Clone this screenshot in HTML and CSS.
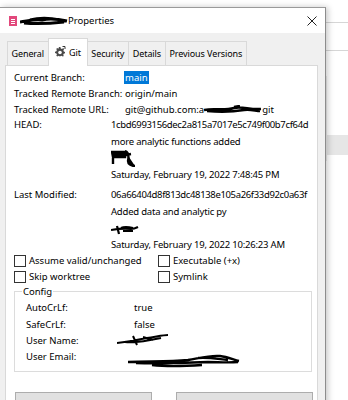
FILE: index.html
```html
<!DOCTYPE html>
<html lang="en">
<head>
    <meta charset="UTF-8">
    <meta name="viewport" content="width=device-width, initial-scale=1.0">
    <title>Properties</title>
    <link rel="stylesheet" href="styles.css">
</head>
<body>
    <div class="desk">
        <div class="bg-line bg-line-1"></div>
        <div class="bg-line bg-line-2"></div>
        <div class="bg-band"></div>

        <div class="window">
            <div class="titlebar">
                <svg class="file-icon" width="8" height="10" viewBox="0 0 8 10">
                    <rect x="0" y="0" width="8" height="10" fill="#e2487c"/>
                    <rect x="2" y="3" width="4" height="1" fill="#fff"/>
                    <rect x="2" y="5" width="4" height="1" fill="#fff"/>
                    <rect x="2" y="7" width="4" height="1" fill="#fff"/>
                </svg>
                <span class="title">
                    <svg class="scribble" width="48" height="10" viewBox="0 0 48 10">
                        <path d="M0 6 C8 5 14 3 22 4 C30 2 38 3 47 5 M4 7 C14 8 26 8 44 6 M10 4 C18 2 30 2 40 4" stroke="#000" stroke-width="3" fill="none"/>
                    </svg>Properties
                </span>
                <svg class="close" width="10" height="10" viewBox="0 0 10 10">
                    <path d="M0.5 0.5 L9.5 9.5 M9.5 0.5 L0.5 9.5" stroke="#222" stroke-width="1"/>
                </svg>
            </div>

            <div class="dialog">
                <div class="tabs">
                    <div class="tab">General</div>
                    <div class="tab tab-active">
                        <svg class="gear" width="12" height="11" viewBox="0 0 12 11">
                            <path d="M5 1 L6.4 1 L6.8 2.4 L8 2.9 L9.2 2.1 L10.1 3.1 L9.4 4.3 L9.8 5.5 L11 5.9 L11 7.3 L9.7 7.7 L9.2 8.9 L9.9 10 L8.7 10.6 L7.6 9.8 L6.4 10.2 L5 10.2 L4.6 9.8 L3.4 10.5 L2.3 9.7 L2.9 8.6 L2.4 7.5 L1 7.1 L1 5.7 L2.4 5.3 L2.9 4.1 L2.2 3 L3.2 2.1 L4.4 2.8 Z" fill="#4a4a4a"/>
                            <circle cx="6" cy="6.5" r="1.8" fill="#fff"/>
                            <path d="M8.5 0.5 L11 0.5 L11 3" stroke="#333" stroke-width="1" fill="none"/>
                        </svg>Git
                    </div>
                    <div class="tab">Security</div>
                    <div class="tab">Details</div>
                    <div class="tab">Previous Versions</div>
                </div>

                <div class="panel">
                    <div class="info info-top">
                        <span class="label">Current Branch:</span>
                        <span class="value"><span class="selected">main</span></span>
                        <span class="label">Tracked Remote Branch:</span>
                        <span class="value">origin/main</span>
                        <span class="label">Tracked Remote URL:</span>
                        <span class="value">git@github.com:a<svg class="scribble" width="58" height="9" viewBox="0 0 58 9">
                            <path d="M0 5 C10 3 20 6 30 3 C38 1 46 5 57 4 M3 6 C14 7 28 7 40 5 C46 4 52 6 56 6 M30 2 L36 1" stroke="#000" stroke-width="2.6" fill="none"/>
                        </svg>git</span>
                    </div>

                    <div class="info info-commit">
                        <span class="label">HEAD:</span>
                        <div class="commit">
                            <div class="hash">1cbd6993156dec2a815a7017e5c749f00b7cf64d</div>
                            <div>more analytic functions added</div>
                            <div class="author">
                                <svg width="26" height="17" viewBox="0 0 26 17">
                                    <path d="M1 2 L14 2 L14 7 L2 7 Z M2 3 L2 14 M14 1 C17 2 18 6 17 11 C17 14 20 16 24 16 M15 5 L20 4" stroke="#000" stroke-width="2.4" fill="#000"/>
                                </svg>
                            </div>
                            <div>Saturday, February 19, 2022 7:48:45 PM</div>
                        </div>
                        <span class="label">Last Modified:</span>
                        <div class="commit">
                            <div class="hash">06a66404d8f813dc48138e105a26f33d92c0a63f</div>
                            <div>Added data and analytic py</div>
                            <div class="author">
                                <svg width="28" height="12" viewBox="0 0 28 12">
                                    <path d="M0 7 C6 6 12 5 20 6 C23 6 25 5 27 4 M6 3 L8 11 M10 5 C14 3 18 4 22 5 M12 8 L22 8" stroke="#000" stroke-width="2.2" fill="none"/>
                                </svg>
                            </div>
                            <div>Saturday, February 19, 2022 10:26:23 AM</div>
                        </div>
                    </div>

                    <div class="flags">
                        <label class="check"><span class="box"></span>Assume valid/unchanged</label>
                        <label class="check"><span class="box"></span>Executable (+x)</label>
                        <label class="check"><span class="box"></span>Skip worktree</label>
                        <label class="check"><span class="box"></span>Symlink</label>
                    </div>

                    <fieldset class="config">
                        <legend>Config</legend>
                        <span class="label">AutoCrLf:</span>
                        <span class="value">true</span>
                        <span class="label">SafeCrLf:</span>
                        <span class="value">false</span>
                        <span class="label">User Name:</span>
                        <span class="value">
                            <svg class="redact-name" width="52" height="12" viewBox="0 0 52 12">
                                <path d="M0 9 C10 8 20 6 30 4 C38 3 46 1 51 1 M8 8 C18 9 30 7 44 4 M16 2 L20 11 M26 3 L36 6" stroke="#000" stroke-width="2" fill="none"/>
                            </svg>
                        </span>
                        <span class="label">User Email:</span>
                        <span class="value">
                            <svg class="redact-email" width="112" height="14" viewBox="0 0 112 14">
                                <path d="M0 8 C20 7 40 8 60 6 C72 4 82 1 92 2 C100 3 106 6 111 7 M8 9 C30 10 56 9 80 8 C90 8 100 9 110 8 M24 11 C40 13 60 12 74 11 M70 4 C80 3 90 5 100 6" stroke="#000" stroke-width="2.4" fill="none"/>
                            </svg>
                        </span>
                    </fieldset>

                    <div class="buttons">
                        <button class="btn"></button>
                        <button class="btn"></button>
                    </div>
                </div>
            </div>
        </div>
    </div>
</body>
</html>
```

FILE: styles.css
```css
body { margin: 0; background: #fff; font-family: "Noto Sans", "Open Sans", sans-serif; font-size: 9.5px; color: #000; }
.desk { position: relative; width: 348px; height: 400px; overflow: hidden; background: #fff; }
.bg-line { position: absolute; left: 326px; right: 0; height: 1px; background: #d6d6d6; }
.bg-line-1 { top: 22px; }
.bg-line-2 { top: 50px; }
.bg-band { position: absolute; left: 326px; right: 0; top: 76px; height: 85px; border-left: 1px solid #ececec; }
.bg-band::after { content: ""; position: absolute; left: 0; right: 0; top: 59px; height: 20px; background: #e6e6e6; }

.window { position: absolute; left: 0; top: 7px; width: 325px; height: 400px; border-top: 1px solid #9a9a9a; border-right: 1px solid #8c8c8c; box-shadow: 2px 0 6px rgba(0,0,0,0.22); background: #f0f0f0; }

.titlebar { height: 25px; background: #fff; display: flex; align-items: center; padding-left: 9px; }
.file-icon { margin-right: 3px; margin-top: 1px; }
.title { flex: 1; font-size: 9.5px; display: flex; align-items: center; }
.close { margin-right: 8px; }

.dialog { padding: 5px 7px 0 5px; }
.tabs { display: flex; align-items: flex-end; height: 27px; padding-left: 2px; }
.tab { height: 24px; padding: 0 4px 0 3.5px; border: 1px solid #d9d9d9; border-bottom: none; margin-right: -1px; background: #f0f0f0; box-sizing: border-box; display: flex; align-items: center; white-space: nowrap; font-size: 9px; letter-spacing: -0.1px; }
.tab-active { height: 28px; background: #fff; padding: 0 6px 0 5px; position: relative; z-index: 1; margin-bottom: -1px; }
.gear { margin-right: 3px; margin-top: -3px; }

.panel { background: #fff; border: 1px solid #d9d9d9; height: 360px; padding: 3px 8px 0 8px; box-sizing: border-box; }
.label { white-space: nowrap; }

.info { display: grid; }
.info-top { grid-template-columns: 111px 1fr; grid-auto-rows: 16px; align-items: center; }
.info-top .value { display: flex; align-items: center; white-space: nowrap; }
.selected { background: #0078d7; color: #fff; padding: 0 1px; margin-left: -1px; }
.info-commit { grid-template-columns: 97px 1fr; align-items: start; }
.info-commit .label { line-height: 16px; }
.commit { line-height: 16.6px; margin-bottom: 4px; white-space: nowrap; letter-spacing: -0.2px; }
.commit div { height: 16.6px; }
.commit .hash { letter-spacing: -0.35px; }
.author { display: flex; align-items: center; }
.info-commit .commit:last-child { margin-bottom: 0; }

.flags { display: grid; grid-template-columns: 144px 1fr; grid-auto-rows: 16px; margin-top: -1px; }
.check { display: flex; align-items: center; white-space: nowrap; }
.box { width: 10px; height: 10px; border: 1px solid #333; margin-right: 3px; background: #fff; }

.config { margin: 0; padding: 2px 0 6px 11px; border: 1px solid #dcdcdc; display: grid; grid-template-columns: 108px 1fr; grid-auto-rows: 16.3px; align-items: center; width: 298px; box-sizing: border-box; }
.config legend { padding: 0 1px; margin-left: -4px; }
.config .value { display: flex; align-items: center; }
.redact-email { margin-left: -6px; margin-top: 8px; }
.redact-name { margin-left: -17px; }

.buttons { display: flex; justify-content: space-between; padding: 0 0 0 1px; margin-top: 20px; width: 298px; }
.btn { width: 137px; height: 20px; background: #e1e1e1; border: 1px solid #adadad; padding: 0; }
```
